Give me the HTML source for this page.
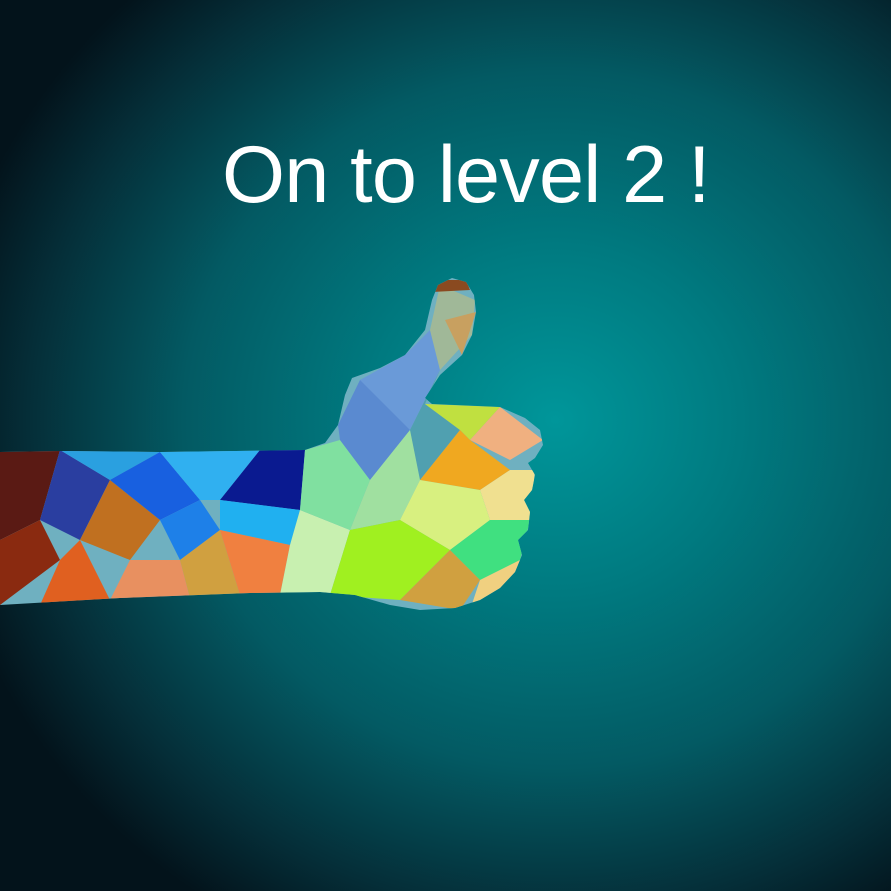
<!DOCTYPE html>
<html><head><style>
html,body{margin:0;padding:0;}
body{width:891px;height:891px;overflow:hidden;position:relative;
background:radial-gradient(ellipse 620px 580px at 555px 420px,#00969a 0%,#007a80 30%,#035a63 60%,#052e38 85%,#03131b 100%);}
.t{position:absolute;left:222px;top:128px;font-family:"Liberation Sans",sans-serif;font-size:81px;letter-spacing:-0.8px;color:#fff;line-height:94px;white-space:nowrap;}
svg{position:absolute;left:0;top:0;}
</style></head><body>
<div class="t">On to level 2 !</div>
<svg width="891" height="891" viewBox="0 0 891 891">
<defs><clipPath id="h">
<path d="M0 452 L60 451 L160 452 L305 450 L325 443 L338 425 L345 395 L352 378 L380 368 L405 355 L425 330 L432 300 L438 285 L452 278 L466 282 L474 295 L476 312 L472 335 L462 355 L440 375 L425 398 L432 404 L500 407 L525 418 L540 430 L543 445 L535 458 L528 463 L535 475 L532 490 L524 500 L530 512 L528 530 L518 540 L522 555 L515 572 L500 588 L480 600 L455 608 L420 610 L390 605 L355 595 L320 592 L250 593 L120 598 L0 605 Z"/>
</clipPath></defs>
<g clip-path="url(#h)">
<rect x="0" y="270" width="560" height="350" fill="#6fb0c0"/>
<polygon points="0,450 60,450 40,520 0,540" fill="#5a1a14"/>
<polygon points="0,540 40,520 60,560 0,605" fill="#8a2a10"/>
<polygon points="40,520 60,450 110,480 80,540" fill="#2a3ea0"/>
<polygon points="60,560 80,540 110,600 40,605" fill="#e06020"/>
<polygon points="80,540 110,480 160,520 130,560" fill="#c07020"/>
<polygon points="110,600 130,560 180,560 190,598" fill="#e89060"/>
<polygon points="60,450 160,452 110,480" fill="#2aa0e0"/>
<polygon points="110,480 160,452 200,500 160,520" fill="#1860e0"/>
<polygon points="160,452 260,450 220,500 200,500" fill="#30b0f0"/>
<polygon points="160,520 200,500 220,530 180,560" fill="#1e80e8"/>
<polygon points="220,500 260,450 305,450 300,510" fill="#0a1a90"/>
<polygon points="220,530 220,500 300,510 290,545" fill="#20b0f0"/>
<polygon points="180,560 220,530 240,595 190,598" fill="#d0a040"/>
<polygon points="220,530 290,545 280,595 240,595" fill="#f08040"/>
<polygon points="290,545 300,510 350,530 330,595 280,595" fill="#c8f0b0"/>
<polygon points="300,510 305,450 340,440 370,480 350,530" fill="#80e0a0"/>
<polygon points="338,425 360,380 400,370 410,430 370,480 340,440" fill="#5a8ad0"/>
<polygon points="360,380 405,355 430,330 440,370 410,430" fill="#6a9ad8"/>
<polygon points="430,330 440,285 475,300 472,335 440,370" fill="#a0b898"/>
<polygon points="432,292 470,290 466,280 440,280" fill="#8a4a20"/>
<polygon points="445,320 476,312 462,355" fill="#c8a060"/>
<polygon points="410,430 440,370 425,404 460,430 420,480 380,470" fill="#50a0b0"/>
<polygon points="370,480 410,430 420,480 400,520 350,530" fill="#a0e0a0"/>
<polygon points="425,404 500,407 470,440 460,430" fill="#c0e040"/>
<polygon points="500,407 543,440 510,460 470,440" fill="#f0b080"/>
<polygon points="420,480 460,430 470,440 510,470 480,490" fill="#f0a820"/>
<polygon points="480,490 510,470 535,470 530,520 490,520" fill="#f0e090"/>
<polygon points="400,520 420,480 480,490 490,520 450,550" fill="#d8f080"/>
<polygon points="350,530 400,520 450,550 400,600 330,595" fill="#a0f020"/>
<polygon points="450,550 490,520 530,520 520,560 480,580" fill="#40e080"/>
<polygon points="400,600 450,550 480,580 460,610" fill="#d0a040"/>
<polygon points="480,580 520,560 510,600 470,610" fill="#f0d080"/>
</g>
</svg>
</body></html>
